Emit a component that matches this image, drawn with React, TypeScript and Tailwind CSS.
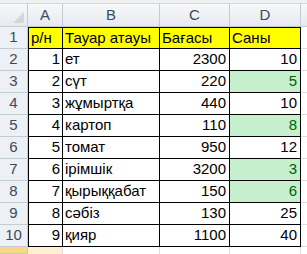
const cols = ["A", "B", "C", "D"];

const rows: { n: string; name: string; price: string; qty: string; green?: boolean }[] = [
  { n: "1", name: "ет", price: "2300", qty: "10" },
  { n: "2", name: "сүт", price: "220", qty: "5", green: true },
  { n: "3", name: "жұмыртқа", price: "440", qty: "10" },
  { n: "4", name: "картоп", price: "110", qty: "8", green: true },
  { n: "5", name: "томат", price: "950", qty: "12" },
  { n: "6", name: "ірімшік", price: "3200", qty: "3", green: true },
  { n: "7", name: "қырыққабат", price: "150", qty: "6", green: true },
  { n: "8", name: "сәбіз", price: "130", qty: "25" },
  { n: "9", name: "қияр", price: "1100", qty: "40" },
];

const font = { fontFamily: "'Liberation Sans', Arial, sans-serif" };

function RowHead({ label, orange }: { label?: string; orange?: boolean }) {
  return (
    <div
      className={`flex items-center justify-center border-r border-b border-[#c5cbd3] text-[15px] text-[#3b4a5c] ${
        orange ? "bg-[#f9d788]" : "bg-[#edf0f4]"
      }`}
    >
      {label}
    </div>
  );
}

export default function App() {
  return (
    <div className="w-[307px] h-[254px] overflow-hidden bg-white" style={font}>
      <div className="h-[4px] bg-[#eef0f2] border-b border-[#d6d9dd]" />
      <div className="grid grid-cols-[28px_35px_97px_70px_71px_1fr] grid-rows-[23px_repeat(10,22px)_1fr] h-[250px]">
        {/* corner */}
        <div className="relative border-r border-b border-[#c5cbd3] bg-gradient-to-b from-[#f7f8fa] to-[#e6e9ee]">
          <div className="absolute right-[3px] bottom-[3px] w-0 h-0 border-l-[11px] border-l-transparent border-b-[11px] border-b-[#d3d7dc]" />
        </div>
        {cols.map((c) => (
          <div
            key={c}
            className="flex items-center justify-center border-r border-b border-[#c5cbd3] bg-gradient-to-b from-[#f7f8fa] to-[#e6e9ee] text-[15px] text-[#3b4a5c]"
          >
            {c}
          </div>
        ))}
        <div className="border-b border-[#c5cbd3] bg-gradient-to-b from-[#f7f8fa] to-[#e6e9ee]" />

        {/* header row */}
        <RowHead label="1" />
        <div className="flex items-center px-[2px] bg-[#ffff00] border-l border-t border-r border-b border-black text-[15px] text-black">р/н</div>
        <div className="flex items-center px-[2px] bg-[#ffff00] border-t border-r border-b border-black text-[15px] text-black">Тауар атауы</div>
        <div className="flex items-center px-[2px] bg-[#ffff00] border-t border-r border-b border-black text-[15px] text-black">Бағасы</div>
        <div className="flex items-center px-[2px] bg-[#ffff00] border-t border-r border-b border-black text-[15px] text-black">Саны</div>
        <div className="border-b border-[#dadcdf]" />

        {rows.map((r, i) => (
          <div key={r.n} className="contents">
            <RowHead label={String(i + 2)} />
            <div className="flex items-center justify-end px-[2px] border-l border-r border-b border-black text-[15px] text-black">{r.n}</div>
            <div className="flex items-center px-[2px] border-r border-b border-black text-[15px] text-black whitespace-nowrap">{r.name}</div>
            <div className="flex items-center justify-end px-[3px] border-r border-b border-black text-[15px] text-black">{r.price}</div>
            <div
              className={`flex items-center justify-end px-[3px] border-r border-b border-black text-[15px] ${
                r.green ? "bg-[#c6efce] text-[#006100]" : "text-black"
              }`}
            >
              {r.qty}
            </div>
            <div className="border-b border-[#dadcdf]" />
          </div>
        ))}

        <RowHead orange />
        <div className="bg-[#fdf0d2] border-r border-[#dadcdf]" />
        <div className="border-r border-[#dadcdf]" />
        <div className="border-r border-[#dadcdf]" />
        <div className="border-r border-[#dadcdf]" />
        <div />
      </div>
    </div>
  );
}
